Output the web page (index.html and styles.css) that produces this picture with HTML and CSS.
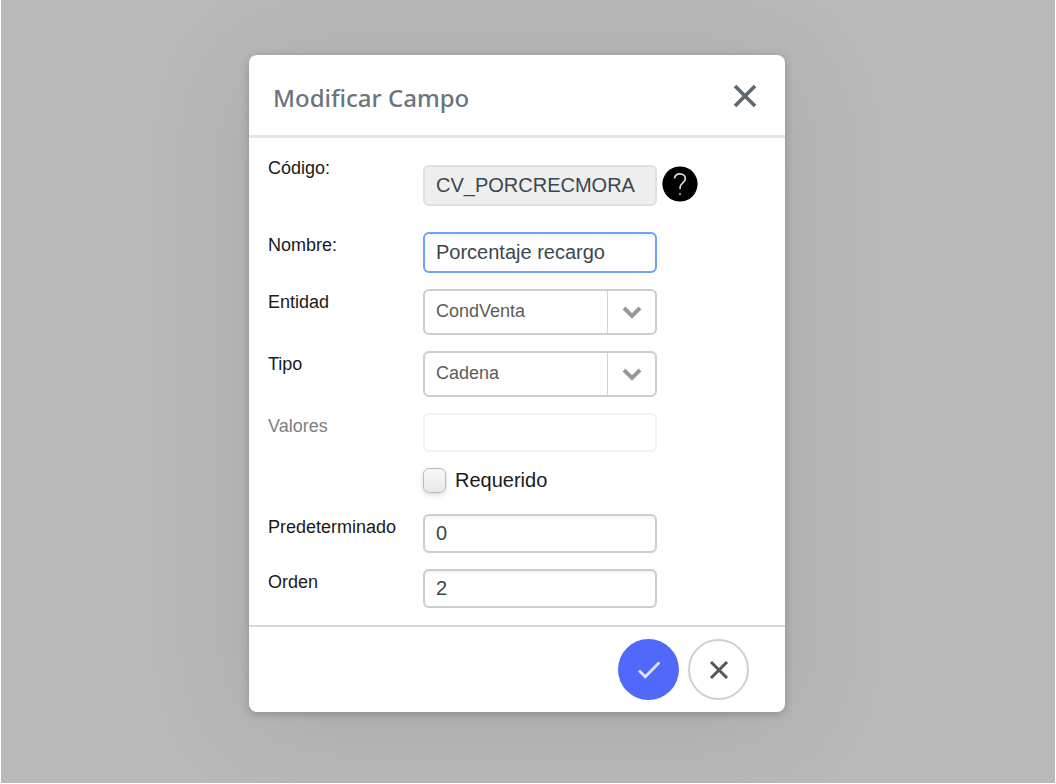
FILE: index.html
```
<!DOCTYPE html>
<html lang="es">
<head>
    <meta charset="UTF-8">
    <meta name="viewport" content="width=device-width, initial-scale=1.0">
    <title>Modificar Campo</title>
    <link rel="stylesheet" href="styles.css">
</head>
<body>
    <div class="overlay">
        <form class="modal" role="dialog" aria-labelledby="modalTitle">
            <div class="modal-header">
                <h1 id="modalTitle">Modificar Campo</h1>
                <button type="button" class="close" aria-label="Cerrar">
                    <svg width="24" height="24" viewBox="0 0 24 24"><path d="M2 2l20 20M22 2L2 22" stroke="#5f676d" stroke-width="3.6"/></svg>
                </button>
            </div>

            <div class="modal-body">
                <div class="row">
                    <label for="codigo">Código:</label>
                    <div class="field-code">
                        <input type="text" id="codigo" class="tall" value="CV_PORCRECMORA" readonly>
                        <button type="button" class="help" aria-label="Ayuda">
                            <svg width="36" height="36" viewBox="0 0 36 36">
                                <circle cx="18" cy="18" r="17.6" fill="#000"/>
                                <path d="M12.4 12.3c.6-2.9 2.6-4.5 5.5-4.5 3.1 0 5.4 1.9 5.4 4.7 0 4.1-5.2 4.5-5.2 9v1.5" fill="none" stroke="#ddd" stroke-width="1.7"/>
                                <circle cx="18" cy="28" r="1.2" fill="#888"/>
                            </svg>
                        </button>
                    </div>
                </div>

                <div class="row">
                    <label for="nombre">Nombre:</label>
                    <input type="text" id="nombre" class="tall active" value="Porcentaje recargo">
                </div>

                <div class="row">
                    <label for="entidad">Entidad</label>
                    <div class="select">
                        <select id="entidad">
                            <option>CondVenta</option>
                        </select>
                        <span class="arrow">
                            <svg width="20" height="14" viewBox="0 0 20 14"><path d="M2 3l8 8 8-8" fill="none" stroke="#999" stroke-width="4"/></svg>
                        </span>
                    </div>
                </div>

                <div class="row">
                    <label for="tipo">Tipo</label>
                    <div class="select">
                        <select id="tipo">
                            <option>Cadena</option>
                        </select>
                        <span class="arrow">
                            <svg width="20" height="14" viewBox="0 0 20 14"><path d="M2 3l8 8 8-8" fill="none" stroke="#999" stroke-width="4"/></svg>
                        </span>
                    </div>
                </div>

                <div class="row disabled">
                    <label for="valores">Valores</label>
                    <input type="text" id="valores" disabled>
                </div>

                <div class="row">
                    <div class="check">
                        <input type="checkbox" id="requerido">
                        <label for="requerido">Requerido</label>
                    </div>
                </div>

                <div class="row">
                    <label for="predeterminado">Predeterminado</label>
                    <input type="text" id="predeterminado" value="0">
                </div>

                <div class="row">
                    <label for="orden">Orden</label>
                    <input type="text" id="orden" value="2">
                </div>
            </div>

            <div class="modal-footer">
                <button type="submit" class="round accept" aria-label="Aceptar">
                    <svg width="24" height="20" viewBox="0 0 24 20"><path d="M2 10.5l6.3 6.3L22.3 2.5" fill="none" stroke="#dfe3ff" stroke-width="2.8"/></svg>
                </button>
                <button type="button" class="round cancel" aria-label="Cancelar">
                    <svg width="20" height="20" viewBox="0 0 20 20"><path d="M2 2l16 16M18 2L2 18" stroke="#555" stroke-width="3"/></svg>
                </button>
            </div>
        </form>
    </div>
</body>
</html>
```
FILE: styles.css
```
* {
    box-sizing: border-box;
}

body {
    margin: 0;
    padding: 0 1px 1px;
    min-height: 100vh;
    display: flex;
    background-color: #fff;
    font-family: "Liberation Sans", Arial, sans-serif;
    font-size: 18px;
    color: #1a1a1a;
}

.overlay {
    flex: 1;
    padding: 55px 22px 55px 0;
    background-color: #b9b9b9;
    overflow: hidden;
}

.modal {
    max-width: 536px;
    margin: 0 auto;
    background-color: #fff;
    border-radius: 8px;
    box-shadow: 0 2px 8px rgba(0, 0, 0, 0.2), 0 12px 110px rgba(0, 0, 0, 0.1);
}

.modal-header {
    display: flex;
    align-items: center;
    justify-content: space-between;
    height: 83px;
    padding: 5px 24px 0;
    border-bottom: 3px solid #e2e5e5;
}

h1 {
    margin: 0;
    font-family: "Noto Sans", "Open Sans", sans-serif;
    font-size: 24px;
    font-weight: 500;
    line-height: 32px;
    color: #6a757e;
}

button {
    display: flex;
    align-items: center;
    justify-content: center;
    padding: 0;
    border: none;
    background: none;
    cursor: pointer;
}

.close {
    width: 32px;
    height: 30px;
    margin-bottom: 4px;
}

.modal-body {
    display: flex;
    flex-direction: column;
    gap: 16px;
    padding: 17px 19px;
}

.row {
    display: grid;
    grid-template-columns: 155px 234px;
    align-items: start;
}

label {
    line-height: 26px;
}

input[type="text"] {
    width: 100%;
    height: 39px;
    padding: 0 11px;
    border: 2px solid #c9ced1;
    border-radius: 6px;
    background-color: #fff;
    box-shadow: inset 0 2px 3px rgba(0, 0, 0, 0.05);
    font-family: inherit;
    font-size: 20px;
    color: #3b474e;
}

input[type="text"].tall {
    height: 41px;
}

input[type="text"]:read-only {
    border-color: #dde1e1;
    background-color: #eee;
    box-shadow: none;
}

input[type="text"].active {
    border-color: #6da2fa;
    outline: none;
}

.field-code {
    display: grid;
    grid-template-columns: 234px 36px;
    align-items: center;
    gap: 5px;
    padding: 10px 0;
}

.help {
    width: 36px;
    height: 36px;
    border-radius: 50%;
    margin-bottom: 4px;
}

.select {
    position: relative;
}

select {
    display: block;
    width: 100%;
    height: 46px;
    padding: 0 60px 2px 11px;
    border: 2px solid #cdcdcd;
    border-radius: 6px;
    background-color: #fff;
    appearance: none;
    font-family: inherit;
    font-size: 18px;
    color: #5c5c5c;
}

.arrow {
    position: absolute;
    top: 2px;
    right: 2px;
    bottom: 2px;
    width: 48px;
    display: flex;
    align-items: center;
    justify-content: center;
    border-left: 1px solid #d2d2d2;
    pointer-events: none;
}

.disabled label {
    color: #808080;
}

.disabled input[type="text"] {
    border-color: #f0f3f3;
    background-color: #fff;
}

.check {
    grid-column: 2;
    display: flex;
    align-items: center;
    gap: 9px;
    padding-bottom: 5px;
}

.check input {
    width: 23px;
    height: 25px;
    margin: 0;
    appearance: none;
    border: 1px solid #bbb;
    border-radius: 6px;
    background: linear-gradient(#f8f8f8, #e8e8e8);
    box-shadow: 0 2px 5px rgba(0, 0, 0, 0.15);
}

.check input:checked {
    background: #5069fb;
}

.check label {
    font-size: 20px;
    line-height: 25px;
}

.modal-footer {
    display: flex;
    justify-content: flex-end;
    gap: 9px;
    padding: 12px 36px;
    border-top: 2px solid #d8d8d8;
}

.round {
    width: 61px;
    height: 61px;
    border-radius: 50%;
}

.accept {
    background-color: #5069fb;
}

.cancel {
    border: 2px solid #cfcfcf;
    background-color: #fff;
}
```
